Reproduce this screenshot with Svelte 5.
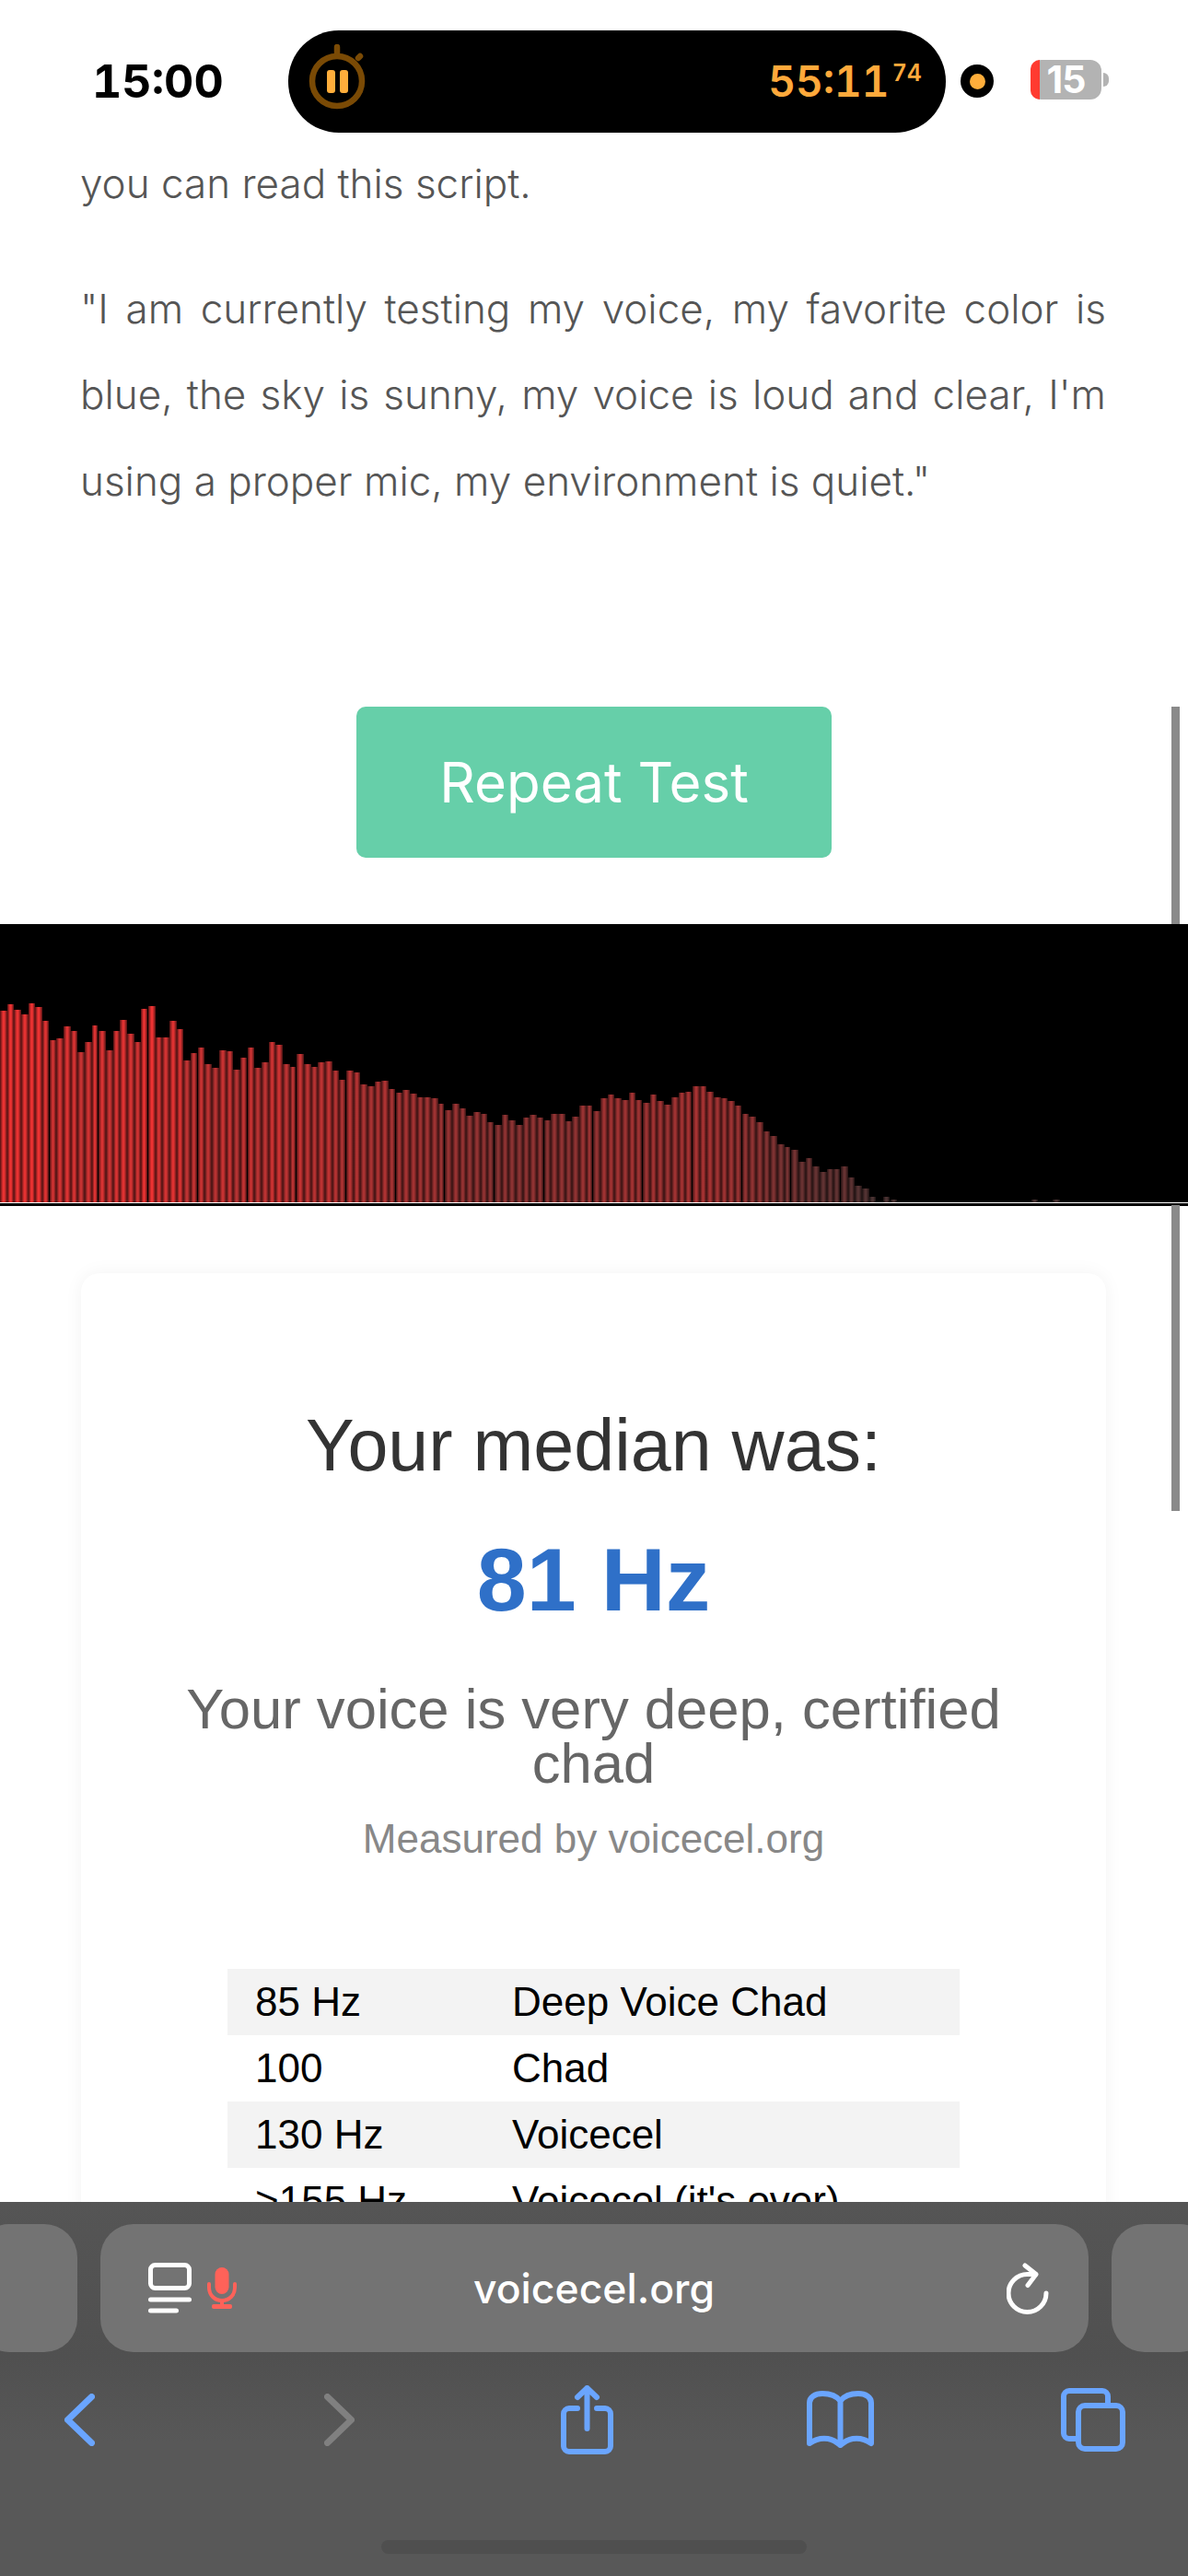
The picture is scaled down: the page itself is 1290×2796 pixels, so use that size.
<script lang="ts">
  // bar tops read off the canvas, converted to heights in px
  const tops = [
    290, 270, 287, 303, 268, 280, 325, 388, 380, 343, 358, 425, 393, 340, 358, 420, 358, 322, 367, 393, 285,
    277, 378, 378, 325, 350, 452, 430, 412, 465, 478, 420, 423, 483, 443, 412, 478, 460, 393, 402, 465, 475,
    433, 465, 475, 460, 457, 485, 515, 487, 493, 532, 538, 522, 520, 547, 558, 550, 560, 573, 573, 575, 595,
    615, 595, 610, 633, 620, 628, 655, 663, 630, 647, 663, 640, 630, 640, 648, 628, 628, 650, 637, 600, 600,
    618, 575, 565, 575, 583, 557, 582, 590, 565, 585, 597, 573, 557, 555, 537, 537, 555, 573, 575, 585, 600,
    627, 637, 653, 683, 698, 725, 735, 743, 782, 772, 797, 815, 807, 807, 797, 833, 862, 870, 898, 915, 897,
    905, 915, 915, 915, 915, 915, 915, 915, 915, 915, 915, 915, 915, 915, 915, 915, 915, 915, 915, 915, 906,
    915, 915, 906, 915, 915, 915, 915, 915, 915, 915, 915, 915, 915, 915, 915, 915, 915, 915, 915, 915, 915
  ];
  const bars = tops.map((t) => (915 - t) / 3);

  function barColor(h: number): string {
    return `rgb(${Math.round(70 + h * 0.78)},50,50)`;
  }

  const ranges = [
    ['85 Hz', 'Deep Voice Chad'],
    ['100', 'Chad'],
    ['130 Hz', 'Voicecel'],
    ['>155 Hz', "Voicecel (it's over)"]
  ];
</script>

<div class="screen">
  <main class="page">
    <p class="copy">you can read this script.</p>
    <p class="copy script">"I am currently testing my voice, my favorite color is blue, the sky is sunny, my voice is loud and clear, I'm using a proper mic, my environment is quiet."</p>

    <button class="repeat">Repeat Test</button>

    <div class="canvas">
      <div class="bars">
        {#each bars as h}
          <span class="bar" style="height: {h}px; background-color: {barColor(h)}"></span>
        {/each}
      </div>
      <div class="baseline"></div>
    </div>

    <section class="card">
      <h2 class="median">Your median was:</h2>
      <div class="hz">81 Hz</div>
      <h3 class="verdict">Your voice is very deep, certified chad</h3>
      <div class="measured">Measured by voicecel.org</div>
      <div class="table">
        {#each ranges as [hz, label]}
          <div class="row"><span class="col-hz">{hz}</span><span>{label}</span></div>
        {/each}
      </div>
    </section>
  </main>

  <div class="scroll-thumb top"></div>
  <div class="scroll-thumb bottom"></div>

  <header class="status">
    <span class="clock">15:00</span>
    <div class="island">
      <svg class="timer" viewBox="0 0 70 72" width="70" height="72">
        <circle cx="33" cy="40" r="27" fill="none" stroke="#7a4a05" stroke-width="6.5" />
        <path d="M33 3v8M56 15l2-2" stroke="#7a4a05" stroke-width="6.5" stroke-linecap="round" fill="none" />
        <rect x="22" y="28" width="9" height="25" rx="3" fill="#ffae3b" />
        <rect x="36" y="28" width="9" height="25" rx="3" fill="#ffae3b" />
      </svg>
      <span class="elapsed">55:11<sup>74</sup></span>
    </div>
    <span class="rec"><i></i></span>
    <div class="battery"><span class="low"></span><b>15</b></div>
    <span class="nub"></span>
  </header>

  <footer class="toolbar">
    <div class="tabs">
      <div class="side"></div>
      <div class="url">
        <svg class="reader" viewBox="0 0 47 55" width="47" height="55" fill="none" stroke="#fff" stroke-width="5">
          <rect x="2.500" y="2.500" width="42" height="25" rx="5" />
          <path d="M2.500 40h42M2.500 52h28" stroke-linecap="round" />
        </svg>
        <svg class="mic" viewBox="0 0 32 45" width="32" height="45" fill="none">
          <rect x="8.500" y="0" width="15" height="29" rx="7.500" fill="#ff6259" />
          <path d="M2 18v4c0 8 6 14 14 14s14-6 14-14v-4" stroke="#ff6259" stroke-width="4" stroke-linecap="round" />
          <path d="M16 36v6" stroke="#ff6259" stroke-width="4" />
          <rect x="5" y="40" width="22" height="5" rx="2" fill="#ff6259" />
        </svg>
        <span class="domain">voicecel.org</span>
        <svg class="reload" viewBox="0 0 46 56" width="46" height="56" fill="none" stroke="#fff" stroke-width="5" stroke-linecap="round" stroke-linejoin="round">
          <path d="M43 33a20.500 20.500 0 1 1-20.500-20.500h9" />
          <path d="M20 3l12 9.500-9 12" />
        </svg>
      </div>
      <div class="side"></div>
    </div>

    <nav class="actions">
      <svg viewBox="0 0 33 57" width="33" height="57" fill="none" stroke="#6aa5ff" stroke-width="7" stroke-linecap="round" stroke-linejoin="round"><path d="M29.500 3.500 3.500 28.500l26 25" /></svg>
      <svg class="forward" viewBox="0 0 33 57" width="33" height="57" fill="none" stroke="#808080" stroke-width="7" stroke-linecap="round" stroke-linejoin="round"><path d="M3.500 3.500l26 25-26 25" /></svg>
      <svg class="share" viewBox="0 0 57 75" width="57" height="75" fill="none" stroke="#6aa5ff" stroke-width="6" stroke-linecap="round" stroke-linejoin="round">
        <path d="M18 25h-9a6 6 0 0 0-6 6v35a6 6 0 0 0 6 6h39a6 6 0 0 0 6-6v-35a6 6 0 0 0-6-6h-9" />
        <path d="M28.500 47V3M18 13 28.500 3 39 13" />
      </svg>
      <svg class="book" viewBox="0 0 73 62" width="73" height="62" fill="none" stroke="#6aa5ff" stroke-width="6" stroke-linecap="round" stroke-linejoin="round">
        <path d="M36.500 11C32 5 25 3 17 3 9 3 3 7 3 13v44c7-5 13-6 20-5 6 1 10 4 13.500 7 3.500-3 7.500-6 13.500-7 7-1 13 0 20 5V13c0-6-6-10-14-10-8 0-15 2-19.500 8zM36.500 11v48" />
      </svg>
      <svg class="pages" viewBox="0 0 70 69" width="70" height="69" fill="none" stroke="#6aa5ff" stroke-width="6">
        <path d="M16 55H9a6 6 0 0 1-6-6V9a6 6 0 0 1 6-6h36a6 6 0 0 1 6 6v10" />
        <rect x="19" y="19" width="48" height="47" rx="7" />
      </svg>
    </nav>
    <div class="home"></div>
  </footer>
</div>

<style>
  :global(body) {
    margin: 0;
    background: #fff;
  }

  .screen {
    position: relative;
    width: 1290px;
    height: 2796px;
    overflow: hidden;
    background: #fff;
    font-family: 'Inter', 'Liberation Sans', sans-serif;
  }

  .page {
    padding-top: 153px;
  }

  .copy {
    margin: 0 89px 42px 87px;
    font-size: 44px;
    font-weight: 300;
    line-height: 93.5px;
    color: #555;
  }

  .script {
    text-align: justify;
    margin-bottom: 198px;
  }

  .repeat {
    display: block;
    width: 516px;
    height: 164px;
    margin: 0 auto 72px;
    padding: 0;
    border: none;
    border-radius: 10px;
    background: #66cfa9;
    color: #fff;
    font-family: inherit;
    font-size: 60px;
    font-weight: 400;
  }

  /* waveform */
  .canvas {
    background: #000;
    height: 306px;
    box-sizing: border-box;
  }

  .bars {
    display: flex;
    align-items: flex-end;
    height: 302px;
    overflow: hidden;
    filter: blur(0.6px);
  }

  .bar {
    flex: none;
    width: 7.68px;
    background-image: linear-gradient(to right, rgba(0, 0, 0, 0.65), transparent 40%, transparent 60%, rgba(0, 0, 0, 0.65));
  }

  .bar:nth-child(7n) {
    width: 6.68px;
    margin-right: 1px;
  }

  .baseline {
    height: 1px;
    background: #fff;
  }

  /* result card */
  .card {
    margin: 73px 89px 0 88px;
    height: 1400px;
    padding-top: 128px;
    box-sizing: border-box;
    border-radius: 20px;
    background: #fff;
    box-shadow: 0 0 20px rgba(0, 0, 0, 0.05);
    font-family: 'Liberation Sans', Arial, sans-serif;
    text-align: center;
  }

  .median {
    margin: 0;
    font-size: 79px;
    font-weight: 400;
    line-height: 118px;
    color: #333;
  }

  .hz {
    margin-top: 28px;
    font-size: 97px;
    font-weight: 700;
    line-height: 118px;
    color: #2f70c8;
  }

  .verdict {
    margin: 51px 70px 0;
    font-size: 61.6px;
    font-weight: 400;
    line-height: 59px;
    color: #666;
  }

  .measured {
    margin-top: 23px;
    font-size: 44px;
    line-height: 60px;
    color: #888;
  }

  .table {
    margin: 111px 159px 0 159px;
    text-align: left;
    font-size: 44px;
    color: #000;
  }

  .row {
    display: flex;
    align-items: center;
    height: 72px;
    padding-left: 30px;
  }

  .row:nth-child(odd) {
    background: #f3f3f3;
  }

  .col-hz {
    width: 279px;
  }

  .scroll-thumb {
    position: absolute;
    left: 1272px;
    width: 9px;
    background: #8a8a8a;
  }

  .scroll-thumb.top {
    top: 767px;
    height: 236px;
  }

  .scroll-thumb.bottom {
    top: 1308px;
    height: 332px;
  }

  /* status bar, floats over the page */
  .status {
    position: absolute;
    top: 0;
    left: 0;
    right: 0;
    height: 176px;
    display: flex;
    align-items: center;
    padding-left: 100px;
    box-sizing: border-box;
  }

  .clock {
    width: 213px;
    font-size: 50px;
    font-weight: 700;
    font-variant-numeric: tabular-nums;
    color: #000;
    line-height: 1;
  }

  .island {
    width: 714px;
    height: 111px;
    border-radius: 55px;
    background: #000;
    display: flex;
    align-items: center;
    justify-content: space-between;
    padding: 0 26px 0 20px;
    box-sizing: border-box;
  }

  .timer {
    margin-top: -8px;
  }

  .elapsed {
    font-size: 46px;
    font-weight: 600;
    font-variant-numeric: tabular-nums;
    color: #ffa93b;
    line-height: 1;
  }

  .elapsed sup {
    font-size: 25px;
    margin-left: 3px;
    vertical-align: 17px;
    line-height: 0;
  }

  .rec {
    width: 36px;
    height: 36px;
    margin-left: 16px;
    border-radius: 50%;
    background: #000;
    display: flex;
    align-items: center;
    justify-content: center;
  }

  .rec i {
    width: 17px;
    height: 17px;
    border-radius: 50%;
    background: #ffae3b;
  }

  .battery {
    position: relative;
    width: 77px;
    height: 43px;
    margin-left: 40px;
    margin-top: -3px;
    border-radius: 12px;
    background: #b3b3b3;
    display: flex;
    align-items: center;
    justify-content: center;
  }

  .low {
    position: absolute;
    left: 0;
    top: 0;
    bottom: 0;
    width: 10px;
    border-radius: 12px 0 0 12px;
    background: #ff3b30;
  }

  .battery b {
    position: relative;
    font-size: 41px;
    font-weight: 700;
    letter-spacing: -1px;
    color: #fff;
    line-height: 1;
  }

  .nub {
    width: 6px;
    height: 15px;
    margin-left: 2px;
    margin-top: -3px;
    border-radius: 0 6px 6px 0;
    background: #b3b3b3;
  }

  /* safari bottom bar */
  .toolbar {
    position: absolute;
    left: 0;
    right: 0;
    top: 2390px;
    bottom: 0;
    background: linear-gradient(#555 0, #505050 170px, #585858 260px);
  }

  .tabs {
    display: flex;
    gap: 25px;
    margin: 24px 0 0 -26px;
  }

  .side {
    flex: none;
    width: 110px;
    height: 139px;
    border-radius: 36px;
    background: #737373;
  }

  .url {
    flex: none;
    width: 1073px;
    height: 139px;
    border-radius: 36px;
    background: #737373;
    display: flex;
    align-items: center;
    padding: 0 43px 0 52px;
    box-sizing: border-box;
  }

  .reader {
    flex: none;
  }

  .mic {
    flex: none;
    margin-left: 17px;
  }

  .domain {
    flex: 1;
    text-align: center;
    margin-left: -60px;
    color: #fff;
    font-size: 44.500px;
    font-weight: 500;
  }

  .reload {
    flex: none;
  }

  .actions {
    display: flex;
    align-items: center;
    margin-top: 33px;
    padding-left: 70px;
    height: 80px;
  }

  .forward {
    margin-left: 249px;
  }

  .share {
    margin-left: 224px;
  }

  .book {
    margin-left: 210px;
  }

  .pages {
    margin-left: 203px;
  }

  .home {
    position: absolute;
    left: 414px;
    top: 367px;
    width: 462px;
    height: 15px;
    border-radius: 8px;
    background: #4f4f4f;
  }
</style>
